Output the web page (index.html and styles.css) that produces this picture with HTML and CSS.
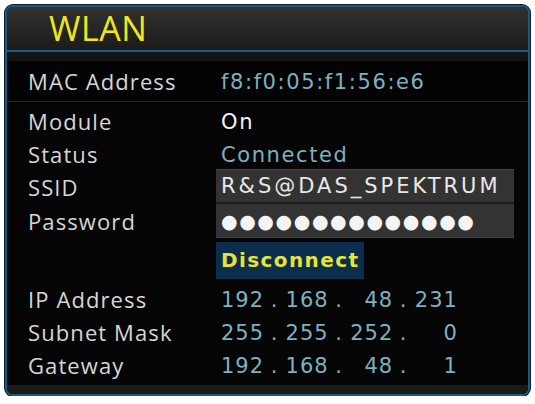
FILE: index.html
```html
<!DOCTYPE html>
<html>
<head>
<meta charset="utf-8">
<link rel="stylesheet" href="styles.css">
</head>
<body>
<div class="panel">
  <div class="header">WLAN</div>
  <div class="body">
    <div class="spacer"></div>
    <div class="row mac">
      <div class="label">MAC Address</div>
      <div class="value teal">f8:f0:05:f1:56:e6</div>
    </div>
    <div class="rows">
      <div class="row">
        <div class="label">Module</div>
        <div class="value white">On</div>
      </div>
      <div class="row">
        <div class="label">Status</div>
        <div class="value teal">Connected</div>
      </div>
      <div class="row field-row">
        <div class="label">SSID</div>
        <div class="field field-top">R&amp;S@DAS_SPEKTRUM</div>
      </div>
      <div class="row field-row">
        <div class="label">Password</div>
        <div class="field field-bottom dots">●●●●●●●●●●●●●●</div>
      </div>
      <div class="row btn-row">
        <div class="label"></div>
        <div class="button">Disconnect</div>
      </div>
      <div class="row">
        <div class="label">IP Address</div>
        <div class="ip teal"><span class="oct">192</span><span class="dot">.</span><span class="oct">168</span><span class="dot">.</span><span class="oct">48</span><span class="dot">.</span><span class="oct">231</span></div>
      </div>
      <div class="row">
        <div class="label">Subnet Mask</div>
        <div class="ip teal"><span class="oct">255</span><span class="dot">.</span><span class="oct">255</span><span class="dot">.</span><span class="oct">252</span><span class="dot">.</span><span class="oct">0</span></div>
      </div>
      <div class="row">
        <div class="label">Gateway</div>
        <div class="ip teal"><span class="oct">192</span><span class="dot">.</span><span class="oct">168</span><span class="dot">.</span><span class="oct">48</span><span class="dot">.</span><span class="oct">1</span></div>
      </div>
    </div>
    <div class="footer"></div>
  </div>
</div>
</body>
</html>
```
FILE: styles.css
```css
html, body {
  margin: 0;
  padding: 0;
  background: #ffffff;
}
body {
  padding: 5px 5px 0 5px;
}
.panel {
  width: 525px;
  height: 391px;
  box-sizing: border-box;
  border: 2px solid #1d5a82;
  box-shadow: 0 0 0 1px #0b1c28;
  border-radius: 8px;
  background: #050505;
  overflow: hidden;
  display: flex;
  flex-direction: column;
}
.header {
  height: 45px;
  box-sizing: border-box;
  background: linear-gradient(#313131, #1b1b1b);
  border-bottom: 2px solid #1d5a82;
  color: #f2e51e;
  font-family: "Open Sans", "Liberation Sans", sans-serif;
  font-size: 34px;
  line-height: 43px;
  padding-left: 42px;
  letter-spacing: 0.5px;
}
.body {
  flex: 1;
  display: flex;
  flex-direction: column;
  background: #050505;
}
.spacer {
  height: 9px;
  background: #141414;
}
.row {
  display: flex;
  align-items: center;
  height: 33px;
  padding-left: 21px;
}
.row.mac {
  height: 40px;
  background: #030303;
  border-bottom: 1px solid #262626;
}
.rows {
  display: flex;
  flex-direction: column;
  padding-top: 2px;
  flex: 1;
}
.label {
  width: 193px;
  flex: none;
  color: #d6d6d6;
  font-family: "Open Sans", "Liberation Sans", sans-serif;
  font-size: 22px;
  letter-spacing: 1.1px;
  font-weight: 400;
}
.value, .ip, .field, .button {
  font-family: "DejaVu Sans", sans-serif;
  font-size: 21px;
  letter-spacing: 1.6px;
}
.value, .ip {
  padding-top: 2px;
}
.teal {
  color: #7db0c0;
}
.white {
  color: #f2f2f2;
}
.field-row {
  height: 34px;
}
.field {
  margin-left: -5px;
  width: 298px;
  height: 34px;
  box-sizing: border-box;
  padding-left: 5px;
  background: #333333;
  color: #e8e8e8;
  display: flex;
  align-items: center;
  letter-spacing: 3px;
}
.field-top {
  border-top: 1px solid #454545;
  border-bottom: 2px solid #1e1e1e;
  margin-top: -2px;
  height: 35px;
}
.field-bottom {
  border-bottom: 1px solid #454545;
}
.dots {
  font-size: 19px;
  letter-spacing: 1.6px;
  color: #f4f4f4;
}
.btn-row {
  height: 38px;
  margin-top: 3px;
}
.button {
  margin-left: -5px;
  width: 148px;
  height: 37px;
  box-sizing: border-box;
  padding-left: 5px;
  background: #0a2e4c;
  color: #e8e23a;
  font-weight: bold;
  font-size: 20px;
  display: flex;
  align-items: center;
  letter-spacing: 1.4px;
}
.btn-row + .row {
  margin-top: 3px;
}
.ip {
  display: flex;
}
.oct {
  width: 43px;
  text-align: right;
  letter-spacing: 1px;
}
.dot {
  width: 21.6px;
  text-align: center;
}
.footer {
  height: 9px;
  background: #1a1a1a;
  flex: none;
}
```
